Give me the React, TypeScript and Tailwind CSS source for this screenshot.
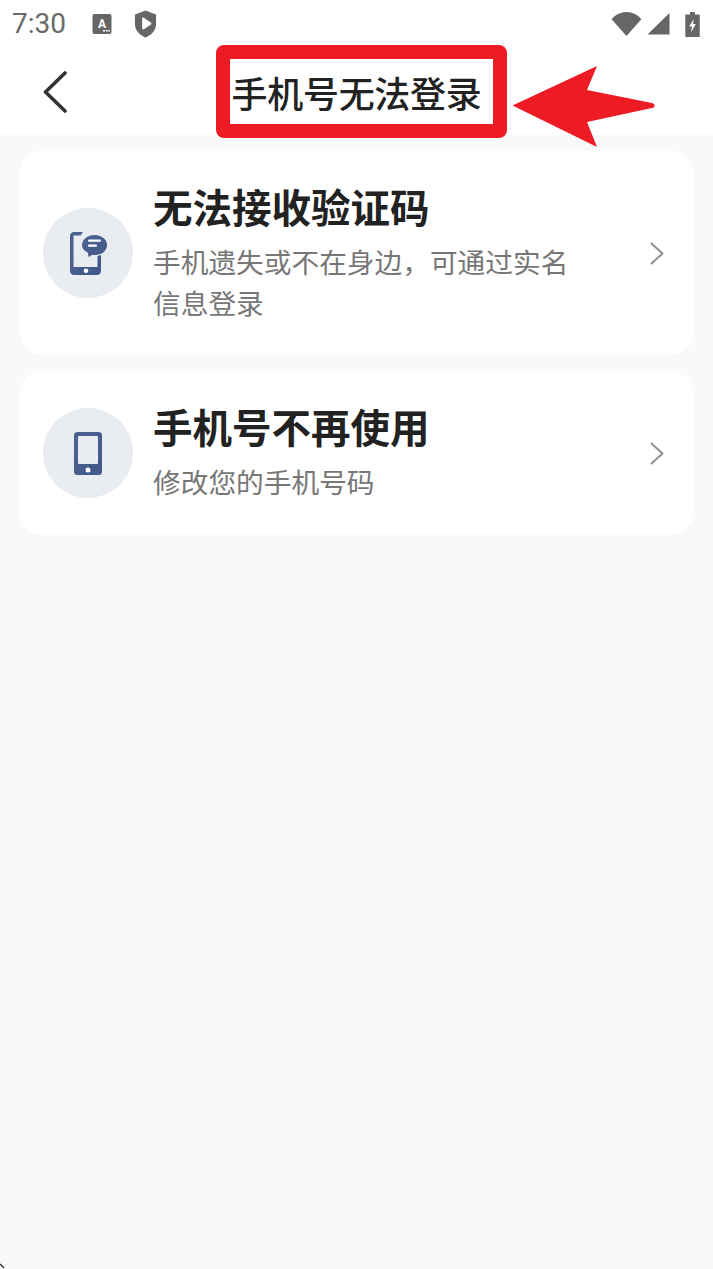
import React from "react";

function MsgPhone() {
  return (
    <svg width="37" height="43" viewBox="0 0 37 43" fill="none">
      <defs>
        <linearGradient id="g1" x1="0" y1="0" x2="1" y2="1">
          <stop offset="0" stopColor="#4c628f" />
          <stop offset="1" stopColor="#42588a" />
        </linearGradient>
      </defs>
      <path fillRule="evenodd" d="M4 0H13L10.500 3.500H3.500V35H27.500V24L31 23V39C31 41.200 29.500 43 27 43H4C1.500 43 0 41.200 0 39V4C0 1.800 1.500 0 4 0Z" fill="url(#g1)" />
      <circle cx="16" cy="38.800" r="2.300" fill="#fff" />
      <path d="M24.500 3C31.500 3 37 7.500 37 13C37 19 31.500 23 25 23C24 23 23.500 23 22.500 22.800L18.500 25L18 20.800C14.500 19 12 16.500 12 13C12 7.500 17.500 3 24.500 3Z" fill="url(#g1)" />
      <rect x="18" y="7.500" width="13" height="2.200" rx="1" fill="#fff" />
      <rect x="18" y="12.500" width="9" height="2.200" rx="1" fill="#fff" />
    </svg>
  );
}

function Phone() {
  return (
    <svg width="28" height="43" viewBox="0 0 28 43" fill="none">
      <defs>
        <linearGradient id="g2" x1="0" y1="0" x2="1" y2="1">
          <stop offset="0" stopColor="#4c628f" />
          <stop offset="1" stopColor="#42588a" />
        </linearGradient>
      </defs>
      <rect width="28" height="43" rx="3.500" fill="url(#g2)" />
      <rect x="4" y="4" width="20" height="28" rx="1" fill="#e9ecf1" />
      <circle cx="14" cy="38" r="2.500" fill="#fff" />
    </svg>
  );
}

function Chevron() {
  return (
    <svg width="14" height="23" viewBox="0 0 14 23" fill="none" className="shrink-0">
      <path d="M1.500 1.500L12.500 11.500L1.500 21.500" stroke="#8f8f8f" strokeWidth="2" strokeLinecap="round" strokeLinejoin="round" />
    </svg>
  );
}

function Card({ icon, title, sub, h }: { icon: React.ReactNode; title: string; sub: string; h: string }) {
  return (
    <div className={`flex items-center rounded-[22px] bg-white pl-[23px] pr-[29px] ${h}`}>
      <div className="flex h-[90px] w-[90px] shrink-0 items-center justify-center rounded-full bg-[#e9ecf1]">{icon}</div>
      <div className="ml-[20px] flex-1 pb-[3px]">
        <div className="text-[39.5px] font-bold leading-[50px] text-[#222222]">{title}</div>
        <div className="mt-[10px] w-[425px] text-[27.7px] leading-[41px] text-[#777777]">{sub}</div>
      </div>
      <Chevron />
    </div>
  );
}

export default function App() {
  return (
    <div
      className="relative flex h-[1269px] w-[713px] flex-col overflow-hidden bg-[#f9f9f9]"
      style={{ fontFamily: '"Noto Sans CJK SC", "Noto Sans", sans-serif' }}
    >
      <div className="bg-white">
        <div className="flex h-[48px] items-center justify-between pl-[12px] pr-[13px]">
          <div className="flex items-center">
            <span className="text-[28px] leading-none text-[#6a6a6a]" style={{ fontFamily: "Roboto, sans-serif" }}>7:30</span>
            <svg width="20" height="20" viewBox="0 0 20 20" className="ml-[26px]">
              <rect width="19" height="20" x="0.500" rx="2" fill="#666" />
              <text x="10" y="13.500" textAnchor="middle" fontSize="12" fontWeight="700" fill="#fff" fontFamily="Roboto, sans-serif">A</text>
              <rect x="11" y="16" width="2" height="1.500" fill="#fff" />
              <rect x="13.800" y="16" width="2" height="1.500" fill="#fff" />
              <rect x="16.500" y="16" width="1.500" height="1.500" fill="#fff" />
            </svg>
            <svg width="23" height="28" viewBox="0 0 24 28" className="ml-[22px]">
              <path d="M12 0L23 4V14C23 21 18 25.500 12 28C6 25.500 1 21 1 14V4Z" fill="#666" />
              <path d="M8.500 8.500C8.500 7.500 9.500 7 10.300 7.500L17.500 12.500C18.300 13 18.300 14.200 17.500 14.700L10.300 19.500C9.500 20 8.500 19.500 8.500 18.500Z" fill="#fff" />
            </svg>
          </div>
          <div className="flex items-center">
            <svg width="31" height="24" viewBox="0 0 32 25">
              <path d="M16 25L0.500 7.500C4 3 10 0 16 0C22 0 28 3 31.500 7.500Z" fill="#666" />
            </svg>
            <svg width="23" height="22" viewBox="0 0 24 23" className="ml-[5px]">
              <path d="M23.500 0V22.500H0.500Z" fill="#666" />
            </svg>
            <svg width="15" height="25" viewBox="0 0 15 26" className="ml-[15px]">
              <path d="M5 0H10V2.500H15V26H0V2.500H5Z" fill="#666" />
              <path d="M9 7L4 15H7L6 21L11 12.500H8Z" fill="#fff" />
            </svg>
          </div>
        </div>
        <div className="relative flex h-[87px] items-center justify-center">
          <svg width="26" height="42" viewBox="0 0 26 42" className="absolute left-[43px] top-[23px]" fill="none">
            <path d="M22 2L2.500 21L22 40" stroke="#333" strokeWidth="3.600" strokeLinecap="round" strokeLinejoin="round" />
          </svg>
          <div className="text-[36px] font-medium leading-none tracking-[-0.3px] text-[#222222]">手机号无法登录</div>
        </div>
      </div>

      <div className="mt-[16px] flex flex-col gap-[16px] px-[20px]">
        <Card h="h-[204px]" icon={<MsgPhone />} title="无法接收验证码" sub="手机遗失或不在身边，可通过实名信息登录" />
        <Card h="h-[164px]" icon={<Phone />} title="手机号不再使用" sub="修改您的手机号码" />
      </div>

      <div className="absolute left-[216px] top-[45px] h-[93px] w-[291px] rounded-[8px] border-[14.500px] border-[#ed1c24]" />
      <svg width="146" height="82" viewBox="0 0 146 82" className="absolute left-[512px] top-[65px]">
        <path d="M0.500 40.500L85 1L75 25L140 38C143.500 39 143.500 42.500 140 43L75 57L85 82Z" fill="#ed1c24" />
      </svg>
      <svg width="6" height="6" viewBox="0 0 6 6" className="absolute bottom-0 left-0">
        <path d="M0 1L4 5" stroke="#333" strokeWidth="1.500" />
      </svg>
    </div>
  );
}
